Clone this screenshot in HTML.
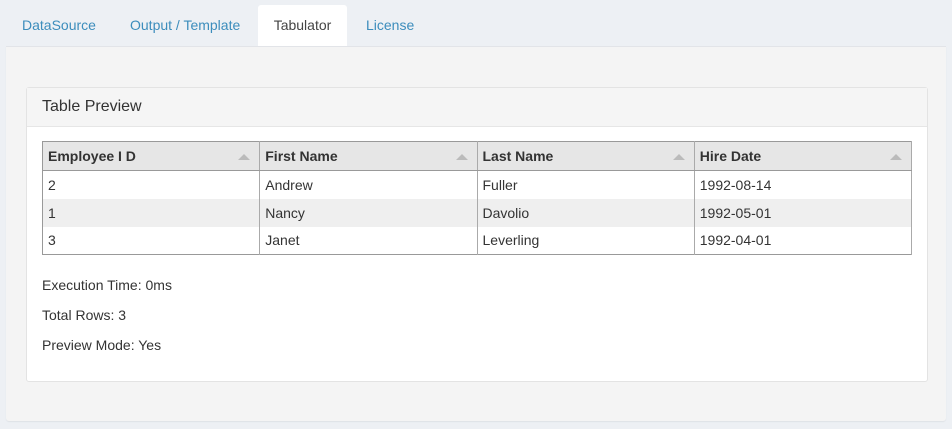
<!DOCTYPE html>
<html><head><style>
*{box-sizing:border-box;margin:0;padding:0}
body{width:952px;height:429px;background:#edf0f4;font-family:"Liberation Sans",sans-serif;font-size:14px;color:#333;position:relative;overflow:hidden}
.tab{position:absolute;top:5px;height:41px;line-height:40px;color:#3c8dbc;font-size:14px}
.active{background:#fff;color:#444;border-radius:3px 3px 0 0;left:258px;width:89px;text-align:center}
.panel{position:absolute;left:6px;top:46px;width:940px;height:375px;background:#f4f4f4;border-top:1px solid #e2e4e8;border-radius:0 0 3px 3px;box-shadow:0 1px 1px #dfe2e6}
.card{position:absolute;left:20px;top:40px;width:902px;height:295px;background:#fff;border:1px solid #e3e3e3;border-radius:3px}
.ch{height:39px;background:#f5f5f5;border-bottom:1px solid #e6e6e6;padding-left:15px;line-height:38px;font-size:16px;color:#333}
table{position:absolute;left:15px;top:53px;width:870px;border-collapse:collapse;border:1px solid #999}
th{height:29px;background:#e6e6e6;text-align:left;font-weight:bold;padding-left:5px;border-right:1px solid #aaa;border-bottom:1px solid #999;position:relative;width:217px}
th:after{content:"";position:absolute;right:9px;top:12px;border-left:6px solid transparent;border-right:6px solid transparent;border-bottom:6px solid #bbb}
td{height:28px;padding-left:5px;border-right:1px solid #aaa}
tr.e td{background:#efefef}
.m{position:absolute;left:15px;font-size:14px}
</style></head><body>
<div class="tab" style="left:22px">DataSource</div>
<div class="tab" style="left:130px">Output / Template</div>
<div class="tab active">Tabulator</div>
<div class="tab" style="left:366px">License</div>
<div class="panel">
<div class="card">
<div class="ch">Table Preview</div>
<table>
<tr><th>Employee I D</th><th>First Name</th><th>Last Name</th><th>Hire Date</th></tr>
<tr><td>2</td><td>Andrew</td><td>Fuller</td><td>1992-08-14</td></tr>
<tr class="e"><td>1</td><td>Nancy</td><td>Davolio</td><td>1992-05-01</td></tr>
<tr><td>3</td><td>Janet</td><td>Leverling</td><td>1992-04-01</td></tr>
</table>
<div class="m" style="top:189px">Execution Time: 0ms</div>
<div class="m" style="top:219px">Total Rows: 3</div>
<div class="m" style="top:249px">Preview Mode: Yes</div>
</div>
</div>
</body></html>
